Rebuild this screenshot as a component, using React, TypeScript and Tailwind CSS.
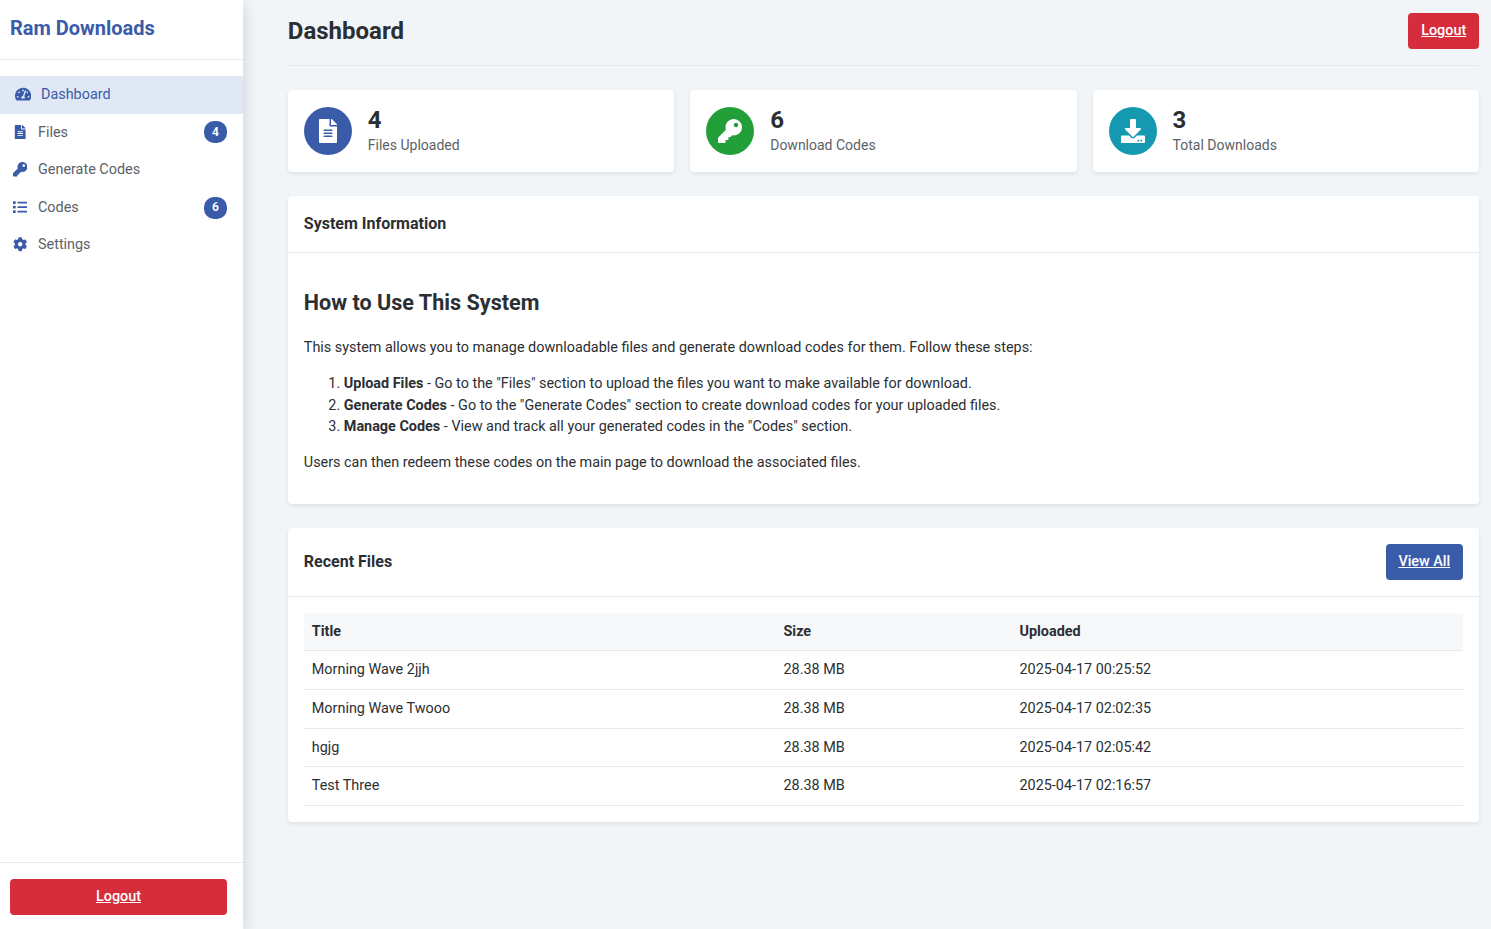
import type { ReactNode } from "react";
import type { IconType } from "react-icons";
import { FaCog, FaDownload, FaFileAlt, FaKey, FaList, FaTachometerAlt } from "react-icons/fa";

type NavItem = { label: string; icon: IconType; badge?: number; active?: boolean };

const navItems: NavItem[] = [
  { label: "Dashboard", icon: FaTachometerAlt, active: true },
  { label: "Files", icon: FaFileAlt, badge: 4 },
  { label: "Generate Codes", icon: FaKey },
  { label: "Codes", icon: FaList, badge: 6 },
  { label: "Settings", icon: FaCog },
];

const stats = [
  { value: 4, label: "Files Uploaded", icon: FaFileAlt, color: "bg-[#3a5ca8]" },
  { value: 6, label: "Download Codes", icon: FaKey, color: "bg-[#239f3a]" },
  { value: 3, label: "Total Downloads", icon: FaDownload, color: "bg-[#1499b0]" },
];

const files = [
  { title: "Morning Wave 2jjh", size: "28.38 MB", uploaded: "2025-04-17 00:25:52" },
  { title: "Morning Wave Twooo", size: "28.38 MB", uploaded: "2025-04-17 02:02:35" },
  { title: "hgjg", size: "28.38 MB", uploaded: "2025-04-17 02:05:42" },
  { title: "Test Three", size: "28.38 MB", uploaded: "2025-04-17 02:16:57" },
];

const steps = [
  { name: "Upload Files", text: 'Go to the "Files" section to upload the files you want to make available for download.' },
  { name: "Generate Codes", text: 'Go to the "Generate Codes" section to create download codes for your uploaded files.' },
  { name: "Manage Codes", text: 'View and track all your generated codes in the "Codes" section.' },
];

function Button({ children, className }: { children: ReactNode; className: string }) {
  return (
    <a href="#" className={`block h-9 rounded px-[12.8px] pt-[7px] text-center font-medium leading-[22px] text-white underline ${className}`}>
      {children}
    </a>
  );
}

function Card({ children, className = "" }: { children: ReactNode; className?: string }) {
  return <section className={`rounded bg-white shadow-[0_2px_4px_rgba(0,0,0,0.08)] ${className}`}>{children}</section>;
}

function Sidebar() {
  return (
    <aside className="z-10 flex w-[243px] shrink-0 flex-col bg-white shadow-[0_4px_16px_rgba(0,0,0,0.15)]">
      <div className="h-[60px] border-b border-[#e6e8ea] pl-2.5 pt-[13px]">
        <h1 className="text-xl font-bold leading-[30px] text-[#3a5ca8]">Ram Downloads</h1>
      </div>
      <nav className="flex grow flex-col pt-4">
        {navItems.map(({ label, icon: Icon, badge, active }) => (
          <a
            key={label}
            href="#"
            className={`flex h-[37.6px] items-center pr-4 ${active ? "bg-[#e1e8f5] pl-[13px] text-[#3a5ca8]" : "pl-2.5 text-[#5a6268]"}`}
          >
            <span className="mr-2 flex w-5 justify-center pb-px text-[#3a5ca8]">
              <Icon className={active ? "size-[16.2px]" : "size-[14.4px]"} />
            </span>
            <span className="grow">{label}</span>
            {badge !== undefined && (
              <span className="flex h-[22px] w-[23px] items-center justify-center rounded-[10px] bg-[#3a5ca8] pb-px text-xs font-semibold text-white">
                {badge}
              </span>
            )}
          </a>
        ))}
      </nav>
      <div className="h-[67px] border-t border-[#e6e8ea] pl-2.5 pr-4 pt-4">
        <Button className="bg-[#d62d3d]">Logout</Button>
      </div>
    </aside>
  );
}

export default function App() {
  return (
    <div className="flex h-[929px] overflow-hidden bg-[#f1f5f8] font-['Roboto',sans-serif] text-[14.4px] leading-[21.6px] text-[#2b2f33]">
      <Sidebar />
      <main className="grow pl-[44.8px] pr-3 pt-[13px]">
        <header className="mb-6 flex h-[53px] items-start justify-between border-b border-[#e6e8ea]">
          <h2 className="text-2xl font-bold leading-9">Dashboard</h2>
          <Button className="bg-[#d62d3d]">Logout</Button>
        </header>

        <div className="mb-6 grid grid-cols-3 gap-4">
          {stats.map(({ value, label, icon: Icon, color }) => (
            <Card key={label} className="flex h-[82px] items-center px-4">
              <span className={`mr-4 flex size-12 items-center justify-center rounded-full text-white ${color}`}>
                <Icon className="size-6" />
              </span>
              <div>
                <div className="text-2xl font-bold leading-[28.8px]">{value}</div>
                <div className="text-sm leading-[21.6px] text-[#5a6268]">{label}</div>
              </div>
            </Card>
          ))}
        </div>

        <Card className="mb-6 h-[308px]">
          <div className="h-[57px] border-b border-[#e6e8ea] px-4 pt-4">
            <h3 className="text-base font-bold leading-6">System Information</h3>
          </div>
          <div className="px-4 pt-[33px]">
            <h2 className="mb-[18px] text-[21.6px] font-bold leading-[33px]">How to Use This System</h2>
            <p className="mb-[14.4px]">
              This system allows you to manage downloadable files and generate download codes for them. Follow these steps:
            </p>
            <ol className="mb-[14.4px] list-decimal pl-10">
              {steps.map((step) => (
                <li key={step.name}>
                  <strong>{step.name}</strong> - {step.text}
                </li>
              ))}
            </ol>
            <p>Users can then redeem these codes on the main page to download the associated files.</p>
          </div>
        </Card>

        <Card className="h-[294px]">
          <div className="flex h-[69px] items-start justify-between border-b border-[#e6e8ea] px-4 pt-4">
            <h3 className="text-base font-bold leading-[35px]">Recent Files</h3>
            <Button className="bg-[#3a5ca8]">View All</Button>
          </div>
          <div className="px-4 pt-4">
            <table className="w-full table-fixed border-separate border-spacing-0 text-left">
              <colgroup>
                <col className="w-[471.7px]" />
                <col className="w-[236px]" />
                <col />
              </colgroup>
              <thead>
                <tr className="bg-[#f7f8fa]">
                  {["Title", "Size", "Uploaded"].map((heading) => (
                    <th key={heading} className="h-[38.4px] border-b border-[#e6e8ea] px-2 font-bold">
                      {heading}
                    </th>
                  ))}
                </tr>
              </thead>
              <tbody>
                {files.map((file) => (
                  <tr key={file.title}>
                    <td className="border-b border-[#e6e8ea] px-2 py-2">{file.title}</td>
                    <td className="border-b border-[#e6e8ea] px-2 py-2">{file.size}</td>
                    <td className="border-b border-[#e6e8ea] px-2 py-2">{file.uploaded}</td>
                  </tr>
                ))}
              </tbody>
            </table>
          </div>
        </Card>
      </main>
    </div>
  );
}
